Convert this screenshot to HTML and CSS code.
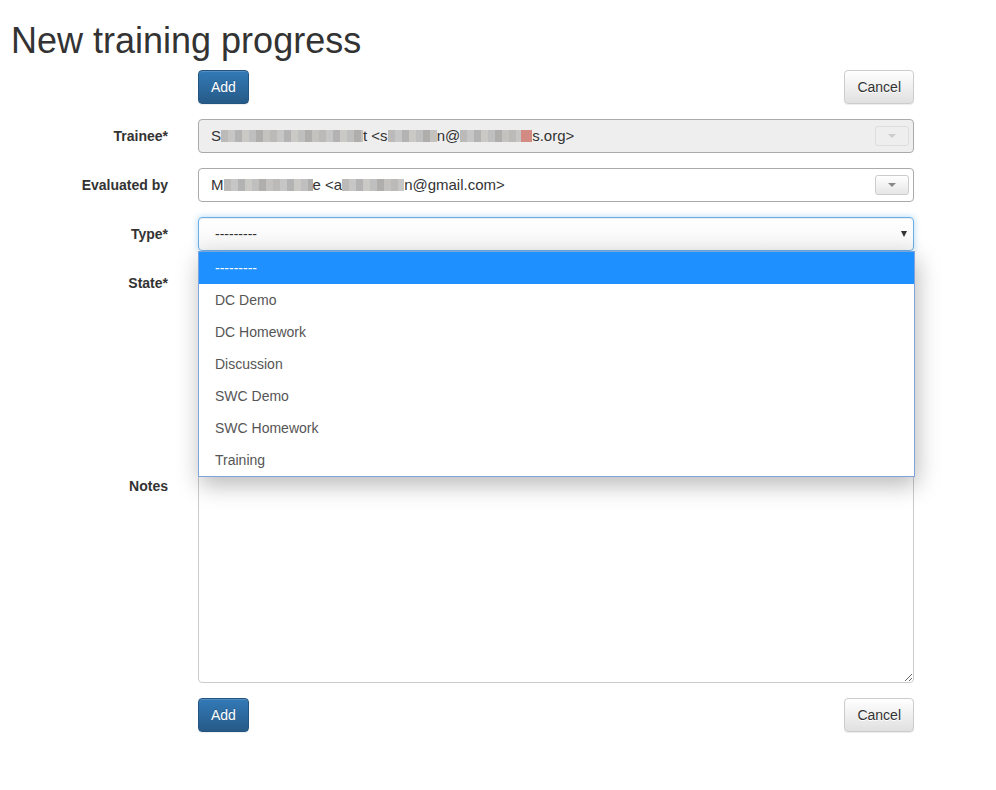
FILE: index.html
```html
<!DOCTYPE html>
<html lang="en">
<head>
<meta charset="utf-8">
<title>New training progress</title>
<link rel="stylesheet" href="styles.css">
</head>
<body>
<div class="container">
  <h1 class="title">New training progress</h1>
  <form class="form">
    <div class="row">
      <div class="label-col"></div>
      <div class="field actions">
        <button type="button" class="btn btn-primary">Add</button>
        <button type="button" class="btn btn-default">Cancel</button>
      </div>
    </div>

    <div class="row">
      <label class="label-col">Trainee*</label>
      <div class="field">
        <div class="s2 s2-disabled">
          <span class="s2-text">S<span class="mosaic m1"></span>t &lt;s<span class="mosaic m2"></span>n@<span class="mosaic m3"></span><span class="mosaic red"></span>s.org&gt;</span>
          <span class="s2-arrow"><span class="tri"></span></span>
        </div>
      </div>
    </div>

    <div class="row">
      <label class="label-col">Evaluated by</label>
      <div class="field">
        <div class="s2">
          <span class="s2-text">M<span class="mosaic m4"></span>e &lt;a<span class="mosaic m5"></span>n@gmail.com&gt;</span>
          <span class="s2-arrow"><span class="tri"></span></span>
        </div>
      </div>
    </div>

    <div class="row">
      <label class="label-col">Type*</label>
      <div class="field">
        <div class="select-wrap">
          <div class="select focused">
            <span class="select-value">---------</span>
            <span class="select-tri"></span>
          </div>
          <ul class="dropdown">
            <li class="opt active">---------</li>
            <li class="opt">DC Demo</li>
            <li class="opt">DC Homework</li>
            <li class="opt">Discussion</li>
            <li class="opt">SWC Demo</li>
            <li class="opt">SWC Homework</li>
            <li class="opt">Training</li>
          </ul>
        </div>
      </div>
    </div>

    <div class="row">
      <label class="label-col">State*</label>
      <div class="field state-list"></div>
    </div>

    <div class="row">
      <label class="label-col">Notes</label>
      <div class="field">
        <textarea class="textarea"></textarea>
      </div>
    </div>

    <div class="row">
      <div class="label-col"></div>
      <div class="field actions">
        <button type="button" class="btn btn-primary">Add</button>
        <button type="button" class="btn btn-default">Cancel</button>
      </div>
    </div>
  </form>
</div>
</body>
</html>
```
FILE: styles.css
```css
html, body {
  margin: 0;
  padding: 0;
  background: #fff;
}
body {
  font-family: "Liberation Sans", Arial, Helvetica, sans-serif;
  font-size: 14px;
  line-height: 20px;
  color: #333;
}
.container {
  padding-left: 11px;
}
.title {
  margin: 21px 0 9px;
  font-size: 36px;
  font-weight: 500;
  line-height: 39.6px;
  color: #333;
}
.form {
  margin: 0;
}
.row {
  display: grid;
  grid-template-columns: 157px 716px;
  column-gap: 30px;
  margin-bottom: 15px;
}
.label-col {
  text-align: right;
  font-weight: bold;
  padding-top: 7px;
  line-height: 20px;
}
.actions {
  display: flex;
  justify-content: space-between;
}
.btn {
  font-family: inherit;
  font-size: 14px;
  line-height: 20px;
  padding: 6px 12px;
  border-radius: 4px;
  border: 1px solid transparent;
  cursor: pointer;
  height: 34px;
}
.btn-primary {
  color: #fff;
  background: linear-gradient(to bottom, #337ab7 0%, #265a88 100%);
  border-color: #245580;
  text-shadow: 0 -1px 0 rgba(0, 0, 0, .2);
  box-shadow: inset 0 1px 0 rgba(255, 255, 255, .15), 0 1px 1px rgba(0, 0, 0, .075);
}
.btn-default {
  color: #333;
  background: linear-gradient(to bottom, #fff 0%, #e0e0e0 100%);
  border-color: #ccc;
  text-shadow: 0 1px 0 #fff;
  box-shadow: inset 0 1px 0 rgba(255, 255, 255, .15), 0 1px 1px rgba(0, 0, 0, .075);
}

/* select2-like boxes */
.s2 {
  box-sizing: border-box;
  height: 34px;
  border: 1px solid #aaa;
  border-radius: 4px;
  background: #fff;
  display: flex;
  align-items: center;
  justify-content: space-between;
  padding: 0 4px 0 12px;
}
.s2-disabled {
  background: #eee;
}
.s2-text {
  font-size: 15px;
  color: #333;
  white-space: nowrap;
  line-height: 20px;
}
.mosaic {
  display: inline-block;
  height: 12px;
  vertical-align: -1px;
  background: repeating-linear-gradient(90deg,
    #bcbab8 0 7px, #c6c6c6 7px 14px, #b3b3b3 14px 21px,
    #cbc9c6 21px 28px, #bfbfbf 28px 35px, #b0aeac 35px 42px,
    #c4c2bf 42px 49px);
}
.m1 { width: 142px; }
.m2 { width: 49px; }
.m3 { width: 61px; }
.red { width: 11px; background: #d28a83; }
.m4 { width: 89px; }
.m5 { width: 62px; }
.s2-arrow {
  box-sizing: border-box;
  width: 34px;
  height: 20px;
  border: 1px solid #ccc;
  border-radius: 3px;
  background: linear-gradient(to bottom, #fff 0%, #e6e6e6 100%);
  display: flex;
  align-items: center;
  justify-content: center;
}
.tri {
  width: 0;
  height: 0;
  border-left: 4px solid transparent;
  border-right: 4px solid transparent;
  border-top: 4px solid #888;
}
.s2-disabled .s2-arrow {
  border-color: #ddd;
  background: #eee;
}
.s2-disabled .tri {
  border-top-color: #ccc;
}

/* native-like select */
.select-wrap {
  position: relative;
}
.select {
  box-sizing: border-box;
  height: 34px;
  border: 1px solid #66afe9;
  border-radius: 4px;
  background: linear-gradient(to bottom, #fff 0%, #f6f6f6 100%);
  box-shadow: inset 0 1px 1px rgba(0, 0, 0, .075), 0 0 6px rgba(102, 175, 233, .5);
  display: flex;
  align-items: center;
  justify-content: space-between;
  padding: 0 6px 0 16px;
  color: #333;
}
.select-tri {
  width: 0;
  height: 0;
  border-left: 3.5px solid transparent;
  border-right: 3.5px solid transparent;
  border-top: 6px solid #333;
}
.dropdown {
  position: absolute;
  top: 100%;
  left: 0;
  width: calc(100% + 1px);
  box-sizing: border-box;
  margin: 0;
  padding: 0;
  list-style: none;
  background: #fff;
  border: 1px solid #7ea4de;
  box-shadow: 2px 8px 22px rgba(0, 0, 0, .28);
  z-index: 10;
}
.opt {
  height: 32px;
  line-height: 32px;
  padding-left: 16px;
  color: #555;
  font-size: 14px;
}
.opt.active {
  background: #1e90ff;
  color: #fff;
}

.state-list {
  height: 188px;
}
.textarea {
  display: block;
  box-sizing: border-box;
  width: 716px;
  height: 214px;
  margin: 0;
  border: 1px solid #ccc;
  border-radius: 4px;
  box-shadow: inset 0 1px 1px rgba(0, 0, 0, .075);
  font-family: inherit;
  font-size: 14px;
  padding: 6px 12px;
  resize: vertical;
}
```
